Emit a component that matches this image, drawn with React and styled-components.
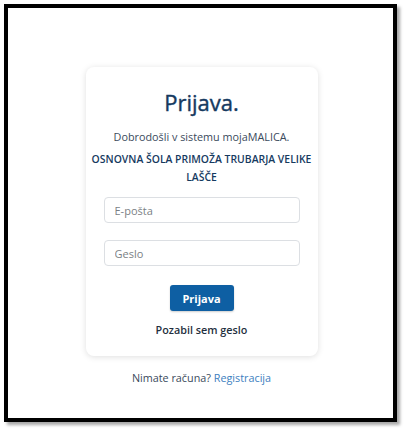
import React from 'react';
import styled, { createGlobalStyle } from 'styled-components';

const GlobalStyle = createGlobalStyle`
  html, body {
    margin: 0;
    padding: 0;
    background: #ffffff;
    font-family: "Open Sans", "Noto Sans", sans-serif;
  }
  * { box-sizing: border-box; }
`;

const Page = styled.div`
  width: 409px;
  height: 434px;
  padding: 4px 0 0 4px;
  background: #ffffff;
`;

const Frame = styled.div`
  width: 393px;
  height: 418px;
  border: 4px solid #000;
  box-shadow: 3px 3px 3px rgba(0, 0, 0, 0.35);
  display: flex;
  flex-direction: column;
  align-items: center;
  padding: 59px 0 0 2px;
`;

const Card = styled.div`
  width: 232px;
  background: #fff;
  border-radius: 8px;
  box-shadow: 0 1px 6px rgba(0, 0, 0, 0.13);
  display: flex;
  flex-direction: column;
  align-items: center;
  padding: 20px 4px 19px;
`;

const Title = styled.h1`
  margin: 0;
  font-size: 22px;
  font-weight: 400;
  -webkit-text-stroke: 0.4px #163a5f;
  color: #163a5f;
  line-height: 30px;
`;

const Welcome = styled.p`
  margin: 12px 0 0;
  font-size: 10.8px;
  color: #3a4a5c;
  line-height: 15px;
`;

const School = styled.p`
  margin: 6px 0 0;
  font-size: 10.4px;
  font-weight: 600;
  color: #163a5f;
  text-align: center;
  line-height: 18px;
  text-transform: uppercase;
`;

const Field = styled.input`
  width: 196px;
  height: 26px;
  margin-top: ${({ $gap }) => $gap}px;
  border: 1px solid #dcdfe3;
  border-radius: 4px;
  padding: 0 10px;
  font-family: inherit;
  font-size: 11px;
  color: #333;
  outline: none;
  &::placeholder {
    color: #7b7f85;
  }
`;

const Button = styled.button`
  margin-top: 19px;
  width: 64px;
  height: 26px;
  border: none;
  border-radius: 3px;
  background: #0e5fa3;
  color: #fff;
  font-family: inherit;
  font-size: 11px;
  font-weight: 700;
  box-shadow: 0 1px 2px rgba(0, 0, 0, 0.2);
`;

const Forgot = styled.a`
  margin-top: 11px;
  font-size: 10.8px;
  font-weight: 600;
  color: #1f2f40;
  text-decoration: none;
`;

const Footer = styled.p`
  margin: 14px 0 0;
  font-size: 10.8px;
  color: #3a4a5c;
  a {
    color: #3d80c0;
    text-decoration: none;
  }
`;

export default function App() {
  return (
    <>
      <GlobalStyle />
      <Page>
        <Frame>
          <Card>
            <Title>Prijava.</Title>
            <Welcome>Dobrodošli v sistemu mojaMALICA.</Welcome>
            <School>Osnovna šola Primoža Trubarja Velike Lašče</School>
            <Field $gap={11} placeholder="E-pošta" />
            <Field $gap={17} type="password" placeholder="Geslo" />
            <Button>Prijava</Button>
            <Forgot href="#">Pozabil sem geslo</Forgot>
          </Card>
          <Footer>
            Nimate računa? <a href="#">Registracija</a>
          </Footer>
        </Frame>
      </Page>
    </>
  );
}
